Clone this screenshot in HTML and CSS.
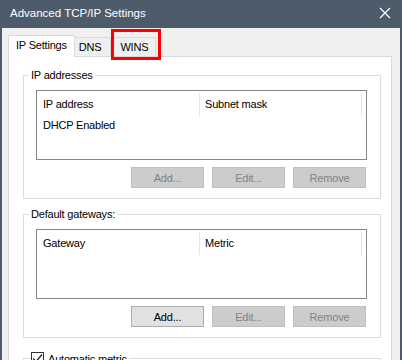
FILE: index.html
```html
<!DOCTYPE html>
<html lang="en">
<head>
  <meta charset="UTF-8">
  <title>Advanced TCP/IP Settings</title>
  <meta name="viewport" content="width=device-width,initial-scale=1">
  <link rel="stylesheet" href="styles.css">
</head>
<body>
  <div class="window">
    <div class="titlebar">
      <span class="title">Advanced TCP/IP Settings</span>
      <svg class="close" width="12" height="12" viewBox="0 0 12 12">
        <path d="M1 1 L11 11 M11 1 L1 11" stroke="#fff" stroke-width="1.2" fill="none"/>
      </svg>
    </div>
    <div class="content">
      <div class="tabs">
        <div class="tab active">IP Settings</div>
        <div class="tab dns">DNS</div>
        <div class="tab marked">WINS<span class="highlight"></span></div>
      </div>
      <div class="panel">
        <!-- IP addresses -->
        <fieldset class="group">
          <legend>IP addresses</legend>
          <div class="list">
            <div class="list-head">
              <div class="col col-a">IP address</div>
              <div class="col col-b">Subnet mask</div>
            </div>
            <div class="list-row">DHCP Enabled</div>
          </div>
          <div class="buttons">
            <button class="btn" disabled>Add...</button>
            <button class="btn" disabled>Edit...</button>
            <button class="btn" disabled>Remove</button>
          </div>
        </fieldset>
        <!-- Default gateways -->
        <fieldset class="group">
          <legend>Default gateways:</legend>
          <div class="list">
            <div class="list-head">
              <div class="col col-a">Gateway</div>
              <div class="col col-b">Metric</div>
            </div>
          </div>
          <div class="buttons">
            <button class="btn">Add...</button>
            <button class="btn" disabled>Edit...</button>
            <button class="btn" disabled>Remove</button>
          </div>
        </fieldset>
        <!-- Automatic metric -->
        <fieldset class="group metric">
          <legend class="check-legend"><span class="checkbox"><svg width="11" height="11" viewBox="0 0 11 11"><path d="M1 5.5 L4 8.5 L10 1.5" stroke="#222" stroke-width="1.2" fill="none"/></svg></span><span class="check-label">Automatic metric</span></legend>
          <div class="metric-space"></div>
        </fieldset>
      </div>
    </div>
  </div>
</body>
</html>
```

FILE: styles.css
```css
body {
  margin: 0;
  background: #f0f0f0;
  font-family: "Liberation Sans", Arial, sans-serif;
  font-size: 11px;
  letter-spacing: -0.2px;
  color: #000;
  overflow: hidden;
}
.window {
  width: 402px;
  height: 420px;
  box-sizing: border-box;
  border-left: 2px solid #4e5b6a;
  border-right: 2px solid #4e5b6a;
  background: #f0f0f0;
}
.titlebar {
  height: 28px;
  background: #4e5b6a;
  margin: 0 -2px;
  padding: 0 10px;
  display: flex;
  align-items: center;
  justify-content: space-between;
}
.title {
  color: #fff;
  font-size: 11.5px;
  letter-spacing: 0;
  padding-bottom: 2px;
}
.close {
  margin-right: 1px;
  margin-bottom: 2px;
}
.content {
  padding: 5px 8px 0 6px;
}
.tabs {
  display: flex;
  align-items: flex-end;
  height: 23px;
}
.tab {
  position: relative;
  height: 18px;
  line-height: 18px;
  padding: 0 5px 0 4px;
  border: 1px solid #d9d9d9;
  border-bottom: none;
  border-left: none;
  background: #f0f0f0;
}
.tab.active {
  height: 21px;
  line-height: 19px;
  padding: 0 7px;
  border-left: 1px solid #d9d9d9;
  background: #fff;
  margin-bottom: -1px;
  z-index: 1;
}
.tab.dns {
  padding: 0 9px 0 4px;
}
.tab.marked {
  width: 35px;
  padding: 0 0 0 9px;
}
.highlight {
  position: absolute;
  left: 0;
  top: -9px;
  width: 44px;
  height: 25px;
  border: 3px solid #ff0000;
}
.panel {
  background: #fff;
  border: 1px solid #d9d9d9;
  padding: 11px 0 0 14px;
  height: 320px;
}
.group {
  width: 358px;
  margin: 0 0 8px 0;
  padding: 8px 13px 10px 12px;
  border: 1px solid #dcdcdc;
  box-sizing: border-box;
}
.group legend {
  padding: 0 2px;
  margin-left: -7px;
  line-height: 14px;
}
.group.metric {
  margin-top: 13px;
}
.list {
  height: 70px;
  box-sizing: border-box;
  border: 1px solid #828790;
  background: #fff;
}
.list-head {
  display: flex;
  height: 23px;
  padding-top: 2px;
}
.col {
  line-height: 23px;
}
.col-a {
  width: 156px;
  padding-left: 6px;
  border-right: 1px solid #e5e5e5;
}
.col-b {
  width: 156px;
  padding-left: 5px;
  border-right: 1px solid #e5e5e5;
}
.list-row {
  padding-left: 6px;
  line-height: 18px;
}
.buttons {
  display: flex;
  justify-content: flex-end;
  gap: 8px;
  margin-top: 7px;
  margin-right: 1px;
}
.btn {
  width: 73px;
  height: 21px;
  font-family: inherit;
  font-size: 11px;
  letter-spacing: -0.2px;
  background: #e1e1e1;
  border: 1px solid #adadad;
  color: #000;
  padding: 0;
}
.btn:disabled {
  background: #cccccc;
  border-color: #bfbfbf;
  color: #838383;
}
.group .check-legend {
  margin-left: -5px;
  padding: 0 2px 0 0;
}
.checkbox {
  display: inline-block;
  vertical-align: middle;
  width: 11px;
  height: 11px;
  border: 1px solid #333;
  background: #fff;
  margin-right: 4px;
  margin-top: -2px;
}
.checkbox svg {
  display: block;
}
.check-label {
  vertical-align: middle;
}
.metric-space {
  height: 40px;
}
```
